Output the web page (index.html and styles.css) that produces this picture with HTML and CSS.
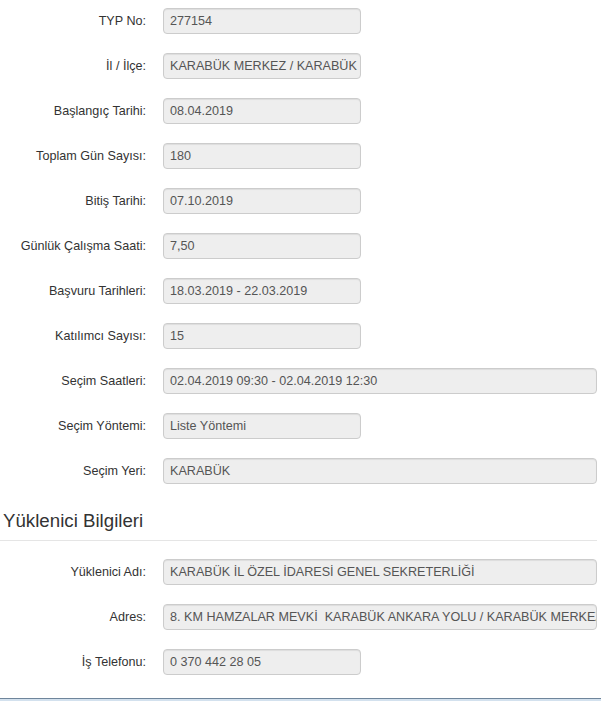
FILE: index.html
```html
<!DOCTYPE html>
<html lang="tr">

<head>
    <meta charset="UTF-8">
    <meta name="viewport" content="width=device-width, initial-scale=1.0">
    <title>TYP Detay</title>
    <link rel="stylesheet" href="styles.css">
</head>

<body>

    <div class="panel">
        <div class="form-row">
            <label>TYP No:</label>
            <div class="field">277154</div>
        </div>
        <div class="form-row">
            <label>İl / İlçe:</label>
            <div class="field">KARABÜK MERKEZ / KARABÜK</div>
        </div>
        <div class="form-row">
            <label>Başlangıç Tarihi:</label>
            <div class="field">08.04.2019</div>
        </div>
        <div class="form-row">
            <label>Toplam Gün Sayısı:</label>
            <div class="field">180</div>
        </div>
        <div class="form-row">
            <label>Bitiş Tarihi:</label>
            <div class="field">07.10.2019</div>
        </div>
        <div class="form-row">
            <label>Günlük Çalışma Saati:</label>
            <div class="field">7,50</div>
        </div>
        <div class="form-row">
            <label>Başvuru Tarihleri:</label>
            <div class="field">18.03.2019 - 22.03.2019</div>
        </div>
        <div class="form-row">
            <label>Katılımcı Sayısı:</label>
            <div class="field">15</div>
        </div>
        <div class="form-row">
            <label>Seçim Saatleri:</label>
            <div class="field wide">02.04.2019 09:30 - 02.04.2019 12:30</div>
        </div>
        <div class="form-row">
            <label>Seçim Yöntemi:</label>
            <div class="field">Liste Yöntemi</div>
        </div>
        <div class="form-row">
            <label>Seçim Yeri:</label>
            <div class="field wide">KARABÜK</div>
        </div>

        <h2 class="section-title">Yüklenici Bilgileri</h2>

        <div class="form-row">
            <label>Yüklenici Adı:</label>
            <div class="field wide">KARABÜK İL ÖZEL İDARESİ GENEL SEKRETERLİĞİ</div>
        </div>
        <div class="form-row">
            <label>Adres:</label>
            <div class="field wide">8. KM HAMZALAR MEVKİ&nbsp; KARABÜK ANKARA YOLU / KARABÜK MERKEZ</div>
        </div>
        <div class="form-row">
            <label>İş Telefonu:</label>
            <div class="field">0 370 442 28 05</div>
        </div>
    </div>

    <div class="footer-line"></div>

</body>

</html>
```

FILE: styles.css
```css
body {
    font-family: "Liberation Sans", Arial, sans-serif;
    font-size: 12.6px;
    color: #333;
    margin: 0;
    background-color: #fff;
}

.panel {
    width: 597px;
    padding-top: 8px;
}

.form-row {
    display: flex;
    align-items: center;
    margin-bottom: 19px;
}

.form-row label {
    width: 146px;
    padding-right: 17px;
    text-align: right;
    flex-shrink: 0;
}

.field {
    box-sizing: border-box;
    width: 198px;
    height: 26px;
    line-height: 24px;
    padding: 0 6px;
    color: #555;
    background-color: #eee;
    border: 1px solid #ccc;
    border-radius: 4px;
    box-shadow: inset 0 1px 1px rgba(0, 0, 0, 0.075);
    white-space: nowrap;
    overflow: hidden;
}

.field.wide {
    width: 434px;
}

.section-title {
    font-size: 18.7px;
    font-weight: normal;
    line-height: 20px;
    margin: 27px 0 18px;
    padding: 0 0 9px 3px;
    border-bottom: 1px solid #e5e5e5;
}

.footer-line {
    margin-top: 23px;
    border-top: 1px solid #6f859b;
    border-bottom: 2px solid #d3e1ee;
}
```
